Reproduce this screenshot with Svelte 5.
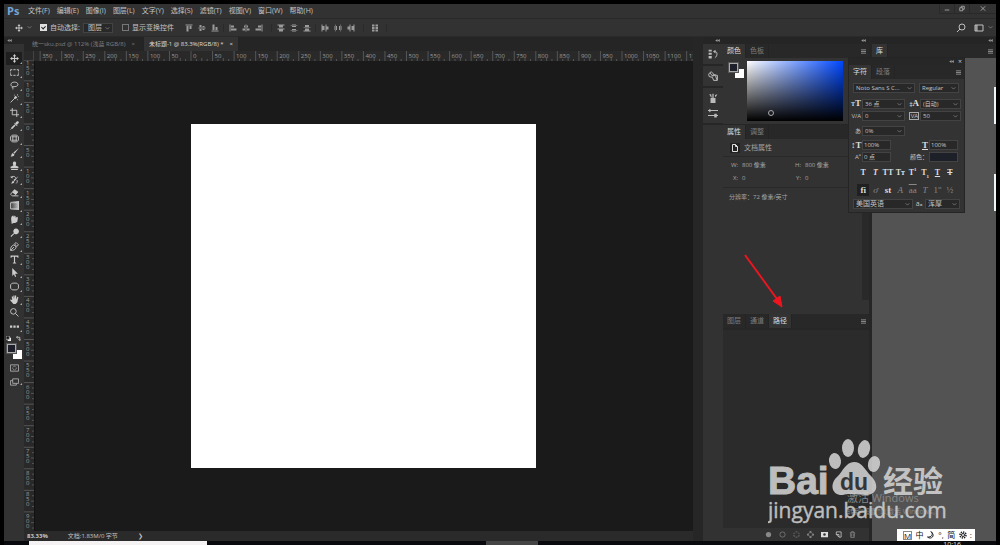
<script lang="ts">
  type Icon = { name: string; fill?: string; line?: string; more?: boolean };

  const menus = ["文件(F)", "编辑(E)", "图像(I)", "图层(L)", "文字(Y)", "选择(S)", "滤镜(T)", "视图(V)", "窗口(W)", "帮助(H)"];

  const movePath = "M8 0l3 4H9v3h3V5l4 3-4 3V9H9v3h2l-3 4-3-4h2V9H4v2L0 8l4-3v2h3V4H5z";

  const tools: Icon[] = [
    { name: "移动", fill: movePath, more: true },
    { name: "矩形选框", line: "M1 6V3h3M6 3h4M12 3h3v3M15 8v2M15 11v2h-3M10 13H6M4 13H1v-2M1 10V8", more: true },
    { name: "套索", line: "M4 10C0 8 1 2 8 2s9 7 1 8c-3 .5-5-.5-5 1s2 1 1 4M4 10l2 1", more: true },
    { name: "魔棒", line: "M1 15L10 6", fill: "M10 3l3 3-3 3-3-3zM13 0h1v3h-1zM14 4h2v1h-2zM7 1h1v2H7zM13 9h1v2h-1z", more: true },
    { name: "裁剪", line: "M4 0v12h12M0 4h12v12", more: true },
    { name: "吸管", line: "M10 6l-7 7-2 2M8 4l5 5", fill: "M9 4l3-3c2-2 5 1 3 3l-3 3zM2 12l6-6 2 2-6 6z", more: true },
    { name: "修补", line: "M4 2h8l3 3v6l-3 3H4l-3-3V5zM5 4v8M11 4v8M3 5h10M3 11h10", more: true },
    { name: "画笔", fill: "M16 0L8 10 6 8zM5 9l3 3c-1 3-4 3-7 3 2-1 1-5 4-6z", more: true },
    { name: "图章", fill: "M6 8C4 4 5 1 8 1s4 3 2 7l5 2v3H1v-3zM2 14h12v2H2z", more: true },
    { name: "历史画笔", fill: "M15 2L8 11 6 9zM5 10l3 2c-1 3-4 3-6 3zM0 3l5-1-1 4z", line: "M3 4c4-3 6-1 7 1M12 9c2 2 1 4-1 6", more: true },
    { name: "橡皮擦", fill: "M8 3l6 4-4 5-6-4z", line: "M8 3l6 4-6 7H4l-3-3zM8 14h7", more: true },
    { name: "渐变", line: "M1 3h14v11H1z", more: true },
    { name: "涂抹", fill: "M2 7c0-4 2-6 4-6l1 3 1-3 2 1v3l3-2 1 2-1 7-4 2H6l-3 2z", more: true },
    { name: "减淡", fill: "M10 1a5 5 0 1 1-2 9l-6 6-1-2 6-5a5 5 0 0 1 3-8z", more: true },
    { name: "钢笔", line: "M1 15c0-5 1-8 6-10l4 4c-1 5-5 6-10 6zM2 14l5-5M8 3l3-2 4 4-3 3z", more: true },
    { name: "文字", fill: "M1 1h14v4h-1l-2-2H9v10l2 1v1H5v-1l2-1V3H4L2 5H1z", more: true },
    { name: "路径选择", fill: "M4 0l10 10H9l2 5-2 1-2-5-3 3z", more: true },
    { name: "圆角矩形", line: "M4 2h8l3 3v6l-3 3H4l-3-3V5z", more: true },
    { name: "抓手", fill: "M4 9L3 3l2-1 1 5V1h2v6l1-6h2v7l2-5 2 1-2 9-3 3H6l-6-7 1-1z", more: true },
    { name: "缩放", line: "M6 1a5 5 0 1 0 0 10A5 5 0 0 0 6 1zM10 10l5 5" },
    { name: "编辑工具栏", fill: "M0 6h4v4H0zM6 6h4v4H6zM12 6h4v4h-4z", more: true },
  ];

  const alignGroups: Icon[][] = [
    [
      { name: "顶对齐", fill: "M1 1h14v2H1zM3 4h4v11H3zM9 4h4v6H9z" },
      { name: "垂直居中", fill: "M1 7h14v2H1zM3 2h4v12H3zM9 4h4v8H9z" },
      { name: "底对齐", fill: "M1 13h14v2H1zM3 1h4v11H3zM9 6h4v6H9z" },
    ],
    [
      { name: "左对齐", fill: "M1 1h2v14H1zM4 3h6v4H4zM4 9h11v4H4z" },
      { name: "水平居中", fill: "M7 1h2v14H7zM4 3h8v4H4zM1 9h14v4H1z" },
      { name: "右对齐", fill: "M13 1h2v14h-2zM6 3h6v4H6zM1 9h11v4H1z" },
    ],
    [
      { name: "按顶分布", fill: "M1 1h14v2H1zM4 3h8v4H4zM1 9h14v2H1zM4 11h8v4H4z" },
      { name: "垂直分布", fill: "M4 1h8v5H4zM1 3h14v1H1zM4 10h8v5H4zM1 12h14v1H1z" },
      { name: "按底分布", fill: "M4 2h8v4H4zM1 6h14v1H1zM4 9h8v4H4zM1 13h14v2H1z" },
    ],
    [
      { name: "按左分布", fill: "M1 1h2v14H1zM3 4h4v8H3zM9 1h2v14H9zM11 5h4v6h-4z" },
      { name: "水平分布", fill: "M1 4h5v8H1zM3 1h1v14H3zM10 4h5v8h-5zM12 1h1v14h-1z" },
      { name: "按右分布", fill: "M1 5h4v6H1zM5 1h2v14H5zM9 4h4v8H9zM13 1h2v14h-2z" },
    ],
    [{ name: "自动对齐", fill: "M2 1h5v4H2zM9 1h5v4H9zM2 6h5v4H2zM9 6h5v4H9zM2 11h5v4H2zM9 11h5v4H9z" }],
  ];

  const dockGroups: Icon[][] = [
    [{ name: "历史记录", fill: "M1 1h5v3H1zM1 6h5v3H1zM1 11h5v4H1zM8 4l4-3v6z", line: "M11 4c5 0 4 8 0 10" }],
    [{ name: "库链接", line: "M1 5l4-4 5 5 5 1v8H9l-2-5-5-1zM3 3l5 6M8 7h4l2 7M7 8l2-3" }],
    [
      { name: "画笔预设", fill: "M4 8h8v8H4zM7 1h2v7H7zM2 2h3l1 5H5zM11 3l4-1-3 5z" },
      { name: "画笔设置", line: "M0 4h16M0 12h16", fill: "M2 1l4 3-4 3zM10 9h4v6h-4z" },
    ],
  ];

  const pathActions: Icon[] = [
    { name: "填充路径", fill: "M8 2a6 6 0 1 0 0 12A6 6 0 0 0 8 2z" },
    { name: "描边路径", line: "M8 2a6 6 0 1 0 0 12A6 6 0 0 0 8 2z" },
    { name: "载入选区", line: "M6 2h4M13 4l1 3M14 9l-1 4M10 14H6M3 13l-1-4M2 7l1-3" },
    { name: "生成路径", line: "M8 2l6 6-6 6-6-6z", fill: "M6 0h4v4H6zM6 12h4v4H6zM0 6h4v4H0zM12 6h4v4h-4z" },
    { name: "添加蒙版", fill: "M0 2h16v12H0zM8 5a3 3 0 1 0 0 6 3 3 0 0 0 0-6z" },
    { name: "新建路径", line: "M3 8V2h11v12H9zM3 8h6v6" },
    { name: "删除路径", line: "M2 4h12M6 4V1h4v3M3 4l1 11h8l1-11M6 6v7M10 6v7" },
  ];

  // screen pixels per 50 document pixels at 83.33%
  const step = 21.55;
  const hTicks = Array.from({ length: 31 }, (_, i) => i - 7);
  const vTicks = Array.from({ length: 22 }, (_, i) => i - 3);

  let autoSelect = $state(true);
  let showTransform = $state(false);
</script>

{#snippet glyph(icon: Icon)}
  <svg class="glyph" viewBox="0 0 16 16" aria-hidden="true">
    {#if icon.fill}<path d={icon.fill} fill="currentColor" fill-rule="evenodd" />{/if}
    {#if icon.line}<path d={icon.line} fill="none" stroke="currentColor" stroke-width="1.6" />{/if}
  </svg>
{/snippet}

{#snippet combo(label: string, value: string)}
  <span class="combo">
    <select aria-label={label}><option>{value}</option></select>
    <svg viewBox="0 0 8 8" aria-hidden="true"><path d="M1 2l3 3 3-3" /></svg>
  </span>
{/snippet}

{#snippet panelMenu()}
  <button class="panel-menu" aria-label="面板菜单"><svg viewBox="0 0 6 5"><path d="M0 .5h6M0 2.5h6M0 4.5h6" /></svg></button>
{/snippet}

{#snippet arrows()}
  <svg class="arrows" viewBox="0 0 6 4" aria-hidden="true"><path d="M3 0v4L0 2zM6 0v4L3 2z" /></svg>
{/snippet}

<div class="screen">
  <main class="app">
    <header class="menubar">
      <strong class="logo">Ps</strong>
      <nav>
        {#each menus as item}<button>{item}</button>{/each}
      </nav>
      <div class="window-buttons">
        <button aria-label="最小化"><svg viewBox="0 0 8 8"><path d="M1 6h6" /></svg></button>
        <button aria-label="还原"><svg viewBox="0 0 8 8"><path d="M1 3h4v4H1zM3 3V1h4v4H5" /></svg></button>
        <button aria-label="关闭"><svg viewBox="0 0 8 8"><path d="M1 1l6 6M7 1L1 7" /></svg></button>
      </div>
    </header>

    <div class="options">
      <button class="current" aria-label="移动工具">
        {@render glyph(tools[0])}
        <svg class="chev" viewBox="0 0 8 8"><path d="M1 2l3 3 3-3" /></svg>
      </button>
      <label class="auto"><input type="checkbox" bind:checked={autoSelect} />自动选择:</label>
      {@render combo("自动选择对象", "图层")}
      <label class="transform"><input type="checkbox" bind:checked={showTransform} />显示变换控件</label>
      {#each alignGroups as group, i}
        <div class="align" class:wide={i === 1} class:single={group.length === 1}>
          {#each group as icon}<button aria-label={icon.name}>{@render glyph(icon)}</button>{/each}
        </div>
      {/each}
      <div class="right-options">
        <button aria-label="搜索"><svg viewBox="0 0 10 10"><path d="M6 1a3 3 0 1 0 0 6 3 3 0 0 0 0-6zM4 6L1 9" /></svg></button>
        <button aria-label="工作区"><svg viewBox="0 0 10 10"><path d="M1 2h8v6H1zM2 2v6M3 2v6" /></svg></button>
        <svg class="chev" viewBox="0 0 8 8"><path d="M1 2l3 3 3-3" /></svg>
      </div>
    </div>

    <div class="workspace">
      <aside class="toolbar">
        <div class="dock-head left">{@render arrows()}</div>
        <div class="tools">
          {#each tools as tool, i}
            <button aria-label={tool.name} class:active={i === 0} class:more={tool.more} class:gradient={tool.name === "渐变"}>{@render glyph(tool)}</button>
          {/each}
        </div>
        <div class="swap">
          <svg viewBox="0 0 6 6"><path d="M2 2h4v4H2z" fill="#eee" /><path d="M0 0h4v4H0z" fill="#111" stroke="#aaa" /></svg>
          <svg viewBox="0 0 6 6"><path d="M1 1.5h3.5V5M2 0L.5 1.5 2 3M3 4l1.5 1.5L6 4" fill="none" stroke="#ccc" /></svg>
        </div>
        <div class="swatches"><i class="bg"></i><i class="fg"></i></div>
        <button class="mode" aria-label="快速蒙版"><svg viewBox="0 0 10 8"><path d="M.5.5h9v7h-9z" /><circle cx="5" cy="4" r="2" stroke-dasharray="1 .6" /></svg></button>
        <button class="mode more" aria-label="屏幕模式"><svg viewBox="0 0 10 8"><path d="M3 .5h6.500v5H3zM3 2.500H.5v5H7v-2" /></svg></button>
      </aside>

      <section class="document">
        <div class="tabs">
          <button>统一sku.psd @ 112% (浅蓝 RGB/8)<span>×</span></button>
          <button class="active">未标题-1 @ 83.3%(RGB/8) *<span>×</span></button>
        </div>
        <div class="ruler-row">
          <div class="corner"></div>
          <svg class="ruler">
            {#each hTicks as n}
              {@const x = 157 + n * step}
              <path d="M{x} 0v10M{x + step / 2} 7v3M{x + step / 4} 8v2M{x + step * 0.75} 8v2" />
              <text x={x + 2} y="7">{Math.abs(n * 50)}</text>
            {/each}
          </svg>
        </div>
        <div class="view">
          <svg class="ruler">
            {#each vTicks as n}
              {@const y = 63 + n * step}
              <path d="M0 {y}h10M7 {y + step / 2}h3M8 {y + step / 4}h2M8 {y + step * 0.75}h2" />
              {#each String(Math.abs(n * 50)) as digit, i}
                <text x="2" y={y + 6 + i * 5}>{digit}</text>
              {/each}
            {/each}
          </svg>
          <div class="canvas"><div class="paper"></div></div>
        </div>
        <footer class="status"><b>83.33%</b><span>文档:1.83M/0 字节</span><i>❯</i></footer>
      </section>

      <aside class="icon-dock">
        <div class="dock-head">{@render arrows()}</div>
        {#each dockGroups as group}
          <div class="dock-group">
            {#each group as icon}<button aria-label={icon.name}>{@render glyph(icon)}</button>{/each}
          </div>
        {/each}
        <div class="dock-rest"></div>
      </aside>

      <aside class="panels">
        <div class="dock-head">{@render arrows()}</div>
        <div class="tabs">
          <button class="active">颜色</button><button>色板</button>
          {@render panelMenu()}
        </div>
        <div class="color-body">
          <div class="swatches"><i class="bg"></i><i class="fg"></i></div>
          <div class="field"><i></i></div>
        </div>
        <div class="tabs">
          <button class="active">属性</button><button>调整</button>
        </div>
        <div class="properties">
          <h2><svg viewBox="0 0 8 8"><path d="M1.500.5h3l2 2v5h-5zM4.500.5v2h2" /></svg>文档属性</h2>
          <dl>
            <div><dt>W:</dt><dd>800 像素</dd></div>
            <div><dt>H:</dt><dd>800 像素</dd></div>
            <div><dt>X:</dt><dd>0</dd></div>
            <div><dt>Y:</dt><dd>0</dd></div>
          </dl>
          <p>分辨率：72 像素/英寸</p>
          <div class="track"></div>
          <svg class="pointer" viewBox="0 0 40 54"><path d="M1 1l32 44" stroke="#ee1520" stroke-width="2" /><path d="M38 53L29 47l7-5z" fill="#ee1520" stroke="#ee1520" /></svg>
        </div>
        <div class="tabs">
          <button>图层</button><button>通道</button><button class="active">路径</button>
          {@render panelMenu()}
        </div>
        <div class="paths"></div>
        <div class="path-actions">
          {#each pathActions as icon}<button aria-label={icon.name}>{@render glyph(icon)}</button>{/each}
        </div>
      </aside>

      <aside class="library">
        <div class="dock-head">{@render arrows()}</div>
        <div class="tabs"><button class="active">库</button>{@render panelMenu()}</div>
        <div class="library-body"></div>
      </aside>

      <section class="character">
        <div class="char-head">{@render arrows()}<button aria-label="关闭面板">×</button></div>
        <div class="tabs"><button class="active">字符</button><button>段落</button>{@render panelMenu()}</div>
        <div class="char-body">
          <div class="fonts">{@render combo("字体", "Noto Sans S C...")}{@render combo("字重", "Regular")}</div>
          <div class="metrics">
            <span class="serif"><small>T</small>T</span>{@render combo("字号", "36 点")}
            <span class="serif"><small>‡</small>A</span>{@render combo("行距", "(自动)")}
            <span>V/A</span>{@render combo("字偶间距", "0")}
            <span class="boxed">VA</span>{@render combo("字距", "50")}
          </div>
          <div class="metrics ratio"><span>あ</span>{@render combo("比例间距", "0%")}</div>
          <div class="scales">
            <span class="serif">↕T</span><input aria-label="垂直缩放" value="100%" />
            <span class="serif"><u>T</u></span><input aria-label="水平缩放" value="100%" />
            <span>Aª</span><input aria-label="基线偏移" value="0 点" />
            <span>颜色：</span><button class="text-color" aria-label="文字颜色"></button>
          </div>
          <div class="styles">
            <button><b>T</b></button><button><i>T</i></button><button>TT</button><button>Tт</button>
            <button>T<sup>1</sup></button><button>T<sub>1</sub></button><button><u>T</u></button><button><s>T</s></button>
          </div>
          <div class="styles features">
            <button class="on">fi</button><button><i>ơ</i></button><button class="lit">st</button><button><i>A</i></button>
            <button class="over">aa</button><button><i>T</i></button><button>1<sup>st</sup></button><button>½</button>
          </div>
          <div class="language">{@render combo("语言", "美国英语")}<span>aₐ</span>{@render combo("消除锯齿", "浑厚")}</div>
        </div>
      </section>
    </div>
  </main>

  <div class="edge one"></div>
  <div class="edge two"></div>

  <div class="activate"><strong>激活 Windows</strong><span>转到“设置”以激活 Windows。</span></div>
  <svg class="watermark" viewBox="0 0 180 86" aria-label="Baidu 经验">
    <g fill="#d2d2d2">
      <text class="brand" x="0" y="55">Bai</text>
      <ellipse cx="67" cy="22" rx="6" ry="8" transform="rotate(-8 67 22)" />
      <ellipse cx="80" cy="9" rx="6" ry="9" />
      <ellipse cx="96" cy="10" rx="6" ry="9" transform="rotate(12 96 10)" />
      <ellipse cx="106" cy="25" rx="6" ry="8" transform="rotate(12 106 25)" />
      <path d="M86 23c8 0 11 8 17 14 9 9 6 19-5 19-6 0-17-2-23 0-11 1-14-11-6-18 6-6 9-15 17-15z" />
      <text class="cn" x="115" y="53">经验</text>
      <text class="url" x="0" y="79">jingyan.baidu.com</text>
    </g>
    <text class="du" x="72" y="51">du</text>
  </svg>

  <div class="ime">
    <span class="m">M</span><span>中</span>
    <svg viewBox="0 0 8 8"><path d="M4 .5c3 3 0 6-3.500 5.500C4 9 9 5 4 .5z" /></svg>
    <span>°,</span><span>简</span>
    <svg viewBox="0 0 8 8"><circle cx="4" cy="4" r="3" stroke-dasharray="1.400 .9" stroke-width="1.500" /><circle cx="4" cy="4" r="1.500" /></svg>
    <span>:</span>
  </div>

  <div class="taskbar"><i class="window"></i><i class="task"></i><time>10:16</time></div>
</div>

<style>
  :global(body) {
    background: #000;
  }

  .screen {
    position: relative;
    display: flex;
    flex-direction: column;
    min-height: 100vh;
    box-sizing: border-box;
    padding: 4px 4px 0;
    overflow: hidden;
    background: #000;
    color: #c4c4c4;
    font: 7px/10px "Open Sans", "Noto Sans CJK SC", sans-serif;
  }

  button,
  input,
  select {
    min-width: 0;
    margin: 0;
    padding: 0;
    border: 0;
    border-radius: 0;
    background: none;
    color: inherit;
    font: inherit;
    white-space: nowrap;
  }

  svg {
    display: block;
    flex: none;
  }

  .glyph {
    width: 8px;
    height: 8px;
  }

  .app {
    flex: 1;
    display: flex;
    flex-direction: column;
    background: #323232;
  }

  .menubar {
    display: flex;
    align-items: center;
    height: 14px;
    border-bottom: 1px solid #292929;
  }

  .logo {
    width: 24px;
    padding-left: 3px;
    box-sizing: border-box;
    color: #75a5d8;
    font-size: 11px;
  }

  nav {
    display: flex;
    gap: 7px;
  }

  .window-buttons {
    display: flex;
    align-self: flex-start;
    margin-left: auto;
  }

  .window-buttons button {
    padding: 1px 4px;
    border: solid #292929;
    border-width: 0 0 1px 1px;
  }

  .window-buttons button:last-child {
    padding: 1px 10px;
  }

  .window-buttons svg {
    width: 6px;
    height: 7px;
    fill: none;
    stroke: #bbb;
  }

  .options {
    display: flex;
    align-items: center;
    height: 17px;
  }

  .current {
    display: flex;
    align-items: center;
    gap: 4px;
    margin: 0 8px 0 11px;
  }

  .chev,
  .combo svg {
    width: 5px;
    height: 5px;
    fill: none;
    stroke: #999;
  }

  label {
    display: flex;
    align-items: center;
    gap: 3px;
    white-space: nowrap;
  }

  .auto {
    width: 43px;
  }

  .transform {
    width: 48px;
    margin: 0 10px 0 9px;
  }

  input[type="checkbox"] {
    appearance: none;
    flex: none;
    width: 7px;
    height: 7px;
    box-sizing: border-box;
    border: 1px solid #777;
  }

  input[type="checkbox"]:checked {
    background: #e0e0e0;
    border-color: #e0e0e0;
  }

  input[type="checkbox"]:checked::after {
    content: "";
    display: block;
    width: 2px;
    height: 3px;
    margin: 0 0 0 1px;
    border: solid #222;
    border-width: 0 1px 1px 0;
    transform: rotate(45deg);
  }

  .combo {
    position: relative;
    display: flex;
    height: 10px;
    box-sizing: border-box;
    border: 1px solid #434343;
    background: #282828;
  }

  .options .combo {
    width: 30px;
  }

  .combo select {
    appearance: none;
    width: 100%;
    padding: 0 8px 0 2px;
    line-height: 8px;
  }

  .options .combo select {
    padding-left: 4px;
  }

  .combo svg {
    position: absolute;
    right: 2px;
    top: 2px;
    pointer-events: none;
  }

  .align {
    display: flex;
    gap: 5px;
    padding: 0 4px 0 5px;
    color: #9b9b9b;
  }

  .align + .align {
    border-left: 1px solid #2a2a2a;
  }

  .align.wide {
    padding-right: 8px;
  }

  .align.single {
    margin-left: 4px;
    padding: 0 7px;
    border-right: 1px solid #2a2a2a;
  }

  .right-options {
    display: flex;
    align-items: center;
    gap: 8px;
    margin-left: auto;
    padding-right: 3px;
  }

  .right-options button svg {
    width: 10px;
    height: 10px;
    fill: none;
    stroke: #c0c0c0;
  }

  .right-options .chev {
    margin-left: -4px;
  }

  .workspace {
    position: relative;
    flex: 1;
    display: flex;
    border-top: 1px solid #2a2a2a;
    background: #262626;
  }

  .dock-head {
    display: flex;
    align-items: center;
    justify-content: flex-end;
    height: 7px;
    padding-right: 3px;
    background: #252525;
  }

  .dock-head.left {
    justify-content: flex-start;
    padding-left: 3px;
  }

  .arrows {
    width: 5px;
    height: 3px;
    fill: #999;
  }

  .toolbar {
    width: 20px;
    background: #323232;
  }

  .tools {
    display: grid;
    grid-auto-rows: 1fr;
    height: 281px;
    padding-top: 8px;
  }

  .tools button {
    position: relative;
    display: grid;
    place-items: center;
    width: 16px;
    margin: 0 2px;
    color: #ccc;
  }

  .tools .glyph {
    width: 9px;
    height: 9px;
  }

  .tools .active {
    background: #1f1f1f;
  }

  .tools .gradient .glyph {
    background: linear-gradient(90deg, #333, #ccc);
  }

  .more::after {
    content: "";
    position: absolute;
    right: 0;
    bottom: 1px;
    border: 1px solid;
    border-color: transparent #aaa #aaa transparent;
  }

  .swap {
    display: flex;
    justify-content: space-between;
    padding: 3px 3px 3px 2px;
  }

  .swap svg {
    width: 5px;
    height: 5px;
  }

  .swatches {
    position: relative;
    width: 15px;
    height: 15px;
    margin: 0 3px;
  }

  .swatches i {
    position: absolute;
    width: 9px;
    height: 9px;
    box-sizing: border-box;
  }

  .swatches .fg {
    top: 0;
    left: 0;
    border: 1px solid #aaa;
    outline: 1px solid #555;
    background: #1d202b;
  }

  .swatches .bg {
    right: 0;
    bottom: 0;
    background: #fff;
  }

  .mode {
    position: relative;
    display: block;
    width: 16px;
    margin: 5px 2px 6px;
  }

  .mode svg {
    width: 9px;
    height: 8px;
    margin: 0 auto;
    fill: none;
    stroke: #aaa;
  }

  .document {
    flex: 1;
    min-width: 0;
    display: flex;
    flex-direction: column;
  }

  .tabs {
    display: flex;
    align-items: stretch;
    height: 14px;
    flex: none;
    background: #282828;
    color: #7e7e7e;
  }

  .tabs button {
    padding: 0 4px;
    border-right: 1px solid #242424;
  }

  .tabs .active {
    background: #333;
    color: #ddd;
  }

  .tabs .panel-menu {
    margin-left: auto;
    padding: 0 3px;
    border: 0;
  }

  .panel-menu svg {
    width: 5px;
    height: 5px;
    stroke: #999;
  }

  .document .tabs {
    background: #252525;
    font-size: 6px;
  }

  .document .tabs button {
    padding: 0 5px;
  }

  .document .tabs button:first-child {
    padding: 0 8px;
  }

  .document .tabs span {
    margin-left: 6px;
  }

  .ruler-row {
    display: flex;
    height: 10px;
    background: #292929;
  }

  .corner {
    width: 10px;
    box-sizing: border-box;
    border: solid #444;
    border-width: 0 1px 1px 0;
  }

  .ruler {
    flex: 1;
    min-width: 0;
    height: 10px;
    overflow: hidden;
    background: #292929;
  }

  .ruler path {
    stroke: #555;
  }

  .ruler text {
    fill: #999;
    font-size: 6px;
  }

  .view {
    flex: 1;
    display: flex;
    min-height: 0;
  }

  .view .ruler {
    flex: none;
    width: 10px;
    height: auto;
  }

  .canvas {
    flex: 1;
    border-left: 1px solid #111;
    background: #1a1a1a;
  }

  .paper {
    width: 345px;
    height: 344px;
    margin: 63px 0 0 156px;
    background: #fff;
  }

  .status {
    display: flex;
    align-items: center;
    gap: 20px;
    height: 10px;
    padding-left: 3px;
    background: #2a2a2a;
    font-size: 6px;
  }

  .status i {
    font-style: normal;
  }

  .icon-dock {
    display: flex;
    flex-direction: column;
    width: 20px;
    margin-left: 10px;
  }

  .dock-group {
    display: flex;
    flex-direction: column;
    gap: 5px;
    margin-bottom: 2px;
    padding: 5px;
    background: #333;
    color: #bbb;
  }

  .dock-group .glyph {
    width: 10px;
    height: 10px;
  }

  .dock-group button {
    width: 10px;
  }

  .dock-rest {
    flex: 1;
    background: #323232;
  }

  .panels {
    display: flex;
    flex-direction: column;
    width: 146px;
    margin-right: 3px;
  }

  .color-body {
    display: flex;
    gap: 3px;
    height: 66px;
    box-sizing: border-box;
    margin-bottom: 1px;
    padding: 3px 26px 3px 3px;
    background: #333;
  }

  .color-body .swatches {
    margin: 2px 0 0 3px;
  }

  .field {
    position: relative;
    flex: 1;
    background: linear-gradient(#0000, #000), linear-gradient(90deg, #fff, #0048ff);
  }

  .field i {
    position: absolute;
    left: 22%;
    top: 81%;
    width: 4px;
    height: 4px;
    border: 1px solid #aaa;
    border-radius: 50%;
  }

  .properties {
    position: relative;
    height: 175px;
    background: #323232;
    color: #a5a5a5;
  }

  h2 {
    display: flex;
    align-items: center;
    gap: 4px;
    height: 17px;
    margin: 0;
    padding-left: 7px;
    border-bottom: 1px solid #292929;
    font: inherit;
  }

  h2 svg {
    width: 8px;
    height: 8px;
    padding: 1px;
    background: #222;
    fill: none;
    stroke: #ddd;
  }

  dl {
    display: grid;
    grid-template-columns: 63px 1fr;
    row-gap: 3px;
    margin: 0;
    padding: 3px 0 4px 7px;
    border-bottom: 1px solid #292929;
    font-size: 6px;
  }

  dl div {
    display: flex;
    gap: 4px;
  }

  dt {
    width: 8px;
    text-align: right;
  }

  dd {
    margin: 0;
  }

  .properties p {
    margin: 4px 6px;
    font-size: 6px;
  }

  .track {
    position: absolute;
    right: 0;
    top: 0;
    width: 7px;
    height: 161px;
    background: #292929;
  }

  .pointer {
    position: absolute;
    left: 21px;
    top: 115px;
    width: 40px;
    height: 54px;
  }

  .paths {
    flex: 1;
    margin-top: 2px;
    background: #2b2b2b;
  }

  .path-actions {
    display: flex;
    align-items: center;
    justify-content: flex-end;
    gap: 7px;
    height: 13px;
    padding-right: 13px;
    background: #323232;
    color: #888;
  }

  .path-actions .glyph {
    width: 7px;
    height: 7px;
  }

  .path-actions button:nth-child(5),
  .path-actions button:nth-child(6) {
    color: #ddd;
  }

  .library {
    display: flex;
    flex-direction: column;
    width: 124px;
  }

  .library-body {
    flex: 1;
    background: #535353;
  }

  .character {
    position: absolute;
    top: 20px;
    right: 31px;
    width: 117px;
    border: 1px solid #252525;
    box-sizing: border-box;
    background: #333;
  }

  .char-head {
    display: flex;
    align-items: center;
    justify-content: flex-end;
    gap: 4px;
    height: 7px;
    padding-right: 2px;
    background: #272727;
    line-height: 7px;
  }

  .char-body {
    padding: 4px 4px 3px 2px;
  }

  .fonts {
    display: grid;
    grid-template-columns: 62px 40px;
    gap: 4px;
    padding: 0 0 5px 2px;
    font-size: 6px;
  }

  .metrics {
    display: grid;
    grid-template-columns: 10px 43px 13px 41px;
    row-gap: 2px;
    column-gap: 1px;
    align-items: center;
    font-size: 6px;
  }

  .metrics > span:not(.combo),
  .scales > span {
    text-align: right;
    white-space: nowrap;
  }

  .metrics.ratio {
    padding: 5px 0 4px;
  }

  .serif {
    color: #ddd;
    font: bold 9px/10px "Liberation Serif", serif;
  }

  .serif small {
    font-size: 6px;
  }

  .boxed {
    border: 1px solid #aaa;
    line-height: 6px;
    margin-left: 3px;
  }

  .scales {
    display: grid;
    grid-template-columns: 10px 29px 36px 29px;
    column-gap: 1px;
    row-gap: 2px;
    align-items: center;
    font-size: 6px;
  }

  .scales input,
  .text-color {
    width: 100%;
    height: 10px;
    box-sizing: border-box;
    padding: 0 1px;
    border: 1px solid #434343;
    background: #282828;
  }

  .scales .text-color {
    background: #1d2028;
  }

  .styles {
    display: grid;
    grid-template-columns: repeat(8, 1fr);
    height: 12px;
    margin: 5px 4px 4px 6px;
    color: #ddd;
    font: bold 8px/12px "Liberation Serif", serif;
  }

  .styles sup,
  .styles sub {
    font-size: 5px;
    line-height: 0;
  }

  .styles.features {
    color: #888;
    font-weight: normal;
    font-size: 9px;
    margin-bottom: 3px;
  }

  .features .on {
    background: #202020;
    color: #ddd;
    font-weight: bold;
  }

  .features .lit {
    color: #ddd;
    font-weight: bold;
  }

  .features .over {
    text-decoration: overline;
  }

  .language {
    display: grid;
    grid-template-columns: 60px 12px 35px;
    padding-left: 2px;
    text-align: center;
  }

  .edge {
    position: absolute;
    right: 4px;
    width: 2px;
    height: 37px;
    background: #eef6fa;
  }

  .edge.one {
    top: 87px;
  }

  .edge.two {
    top: 174px;
  }

  .activate {
    position: absolute;
    right: 54px;
    bottom: 26px;
    display: grid;
    width: 99px;
    color: #858585;
    font-size: 7px;
    line-height: 14px;
    white-space: nowrap;
  }

  .activate strong {
    font-size: 11px;
    font-weight: normal;
  }

  .watermark {
    position: absolute;
    right: 52px;
    bottom: 20px;
    width: 180px;
    height: 86px;
    opacity: 0.88;
  }

  .brand {
    font: bold 39px "Liberation Sans", sans-serif;
    stroke: #d2d2d2;
  }

  .cn {
    font: bold 30px "Noto Sans CJK SC", sans-serif;
  }

  .url {
    font: 21px "Open Sans", sans-serif;
    stroke: #d2d2d2;
    stroke-width: 0.4;
  }

  .du {
    fill: #383838;
    font: bold 23px "Liberation Sans", sans-serif;
  }

  .ime {
    position: absolute;
    right: 25px;
    bottom: 4px;
    display: flex;
    align-items: center;
    justify-content: space-between;
    width: 78px;
    height: 12px;
    box-sizing: border-box;
    padding: 0 3px 0 6px;
    background: #fff;
    color: #111;
    font-size: 8px;
  }

  .ime .m {
    border: 1px solid #888;
    line-height: 7px;
  }

  .ime svg {
    width: 8px;
    height: 8px;
    fill: none;
    stroke: #222;
  }

  .taskbar {
    display: flex;
    height: 4px;
    overflow: hidden;
    background: #080a0d;
  }

  .window {
    width: 178px;
    margin: 0 279px 0 25px;
    background: #f4f2f2;
  }

  .task {
    width: 52px;
    background: #444;
  }

  time {
    margin-left: auto;
    padding-right: 35px;
    color: #ddd;
    line-height: 8px;
  }
</style>
